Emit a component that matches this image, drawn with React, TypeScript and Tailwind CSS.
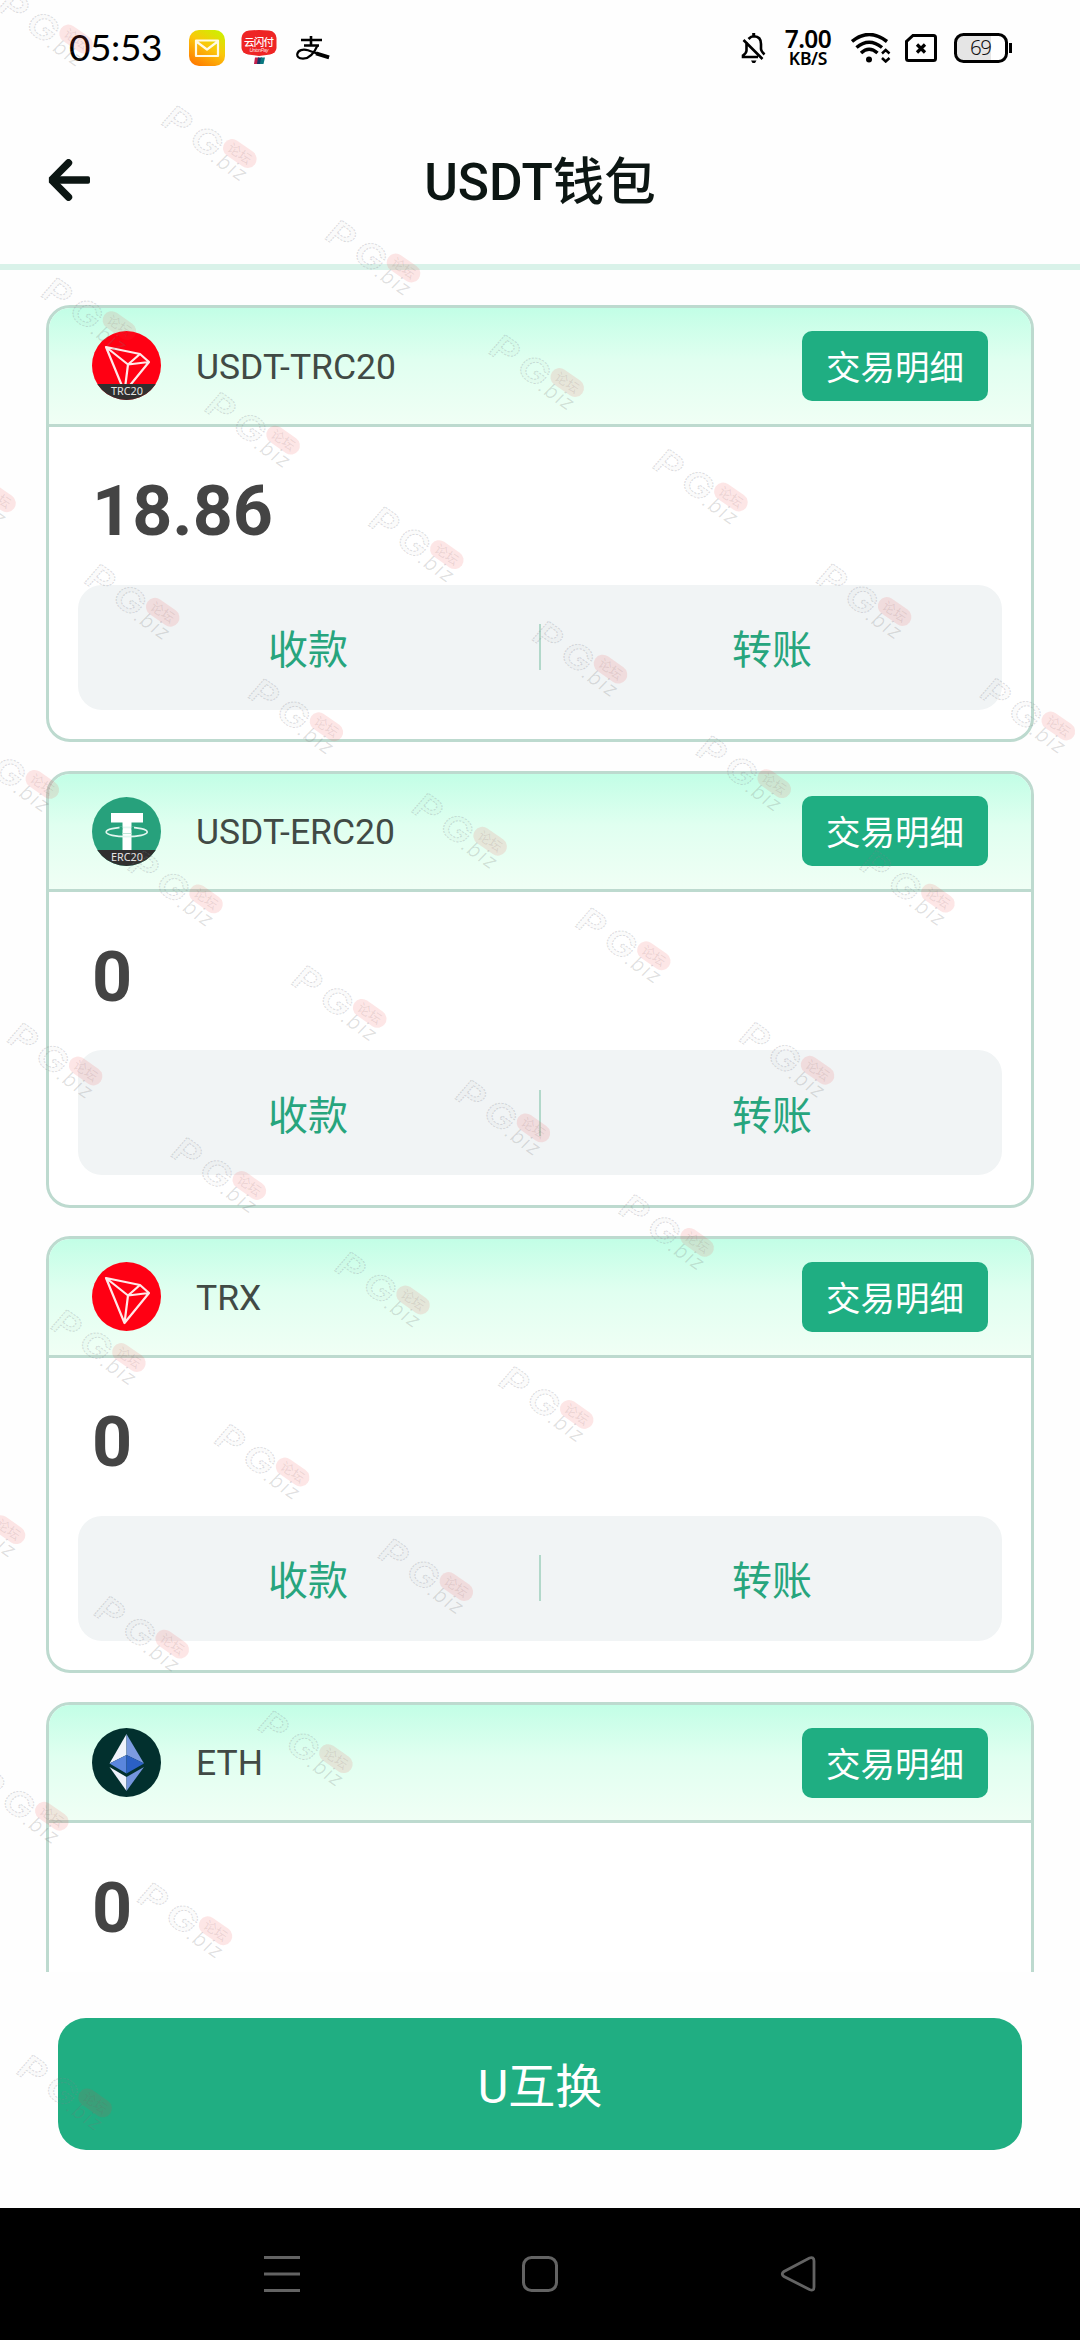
import { clsx } from 'clsx';

interface Wallet {
  name: string;
  balance: string;
  icon: React.ElementType;
}

function TronIcon({ label }: { label?: string }) {
  return (
    <svg className="h-[69px] w-[69px]" viewBox="0 0 69 69">
      <clipPath id="coin">
        <circle cx="34.5" cy="34.5" r="34.5" />
      </clipPath>
      <g clipPath="url(#coin)">
        <rect width="69" height="69" fill="#ff0013" />
        <path
          d="M14 16 48 23 57 31 32.500 61ZM14 16 36 33.500 57 31M36 33.500 48 23M36 33.500 32.500 61"
          fill="none"
          stroke="#ffe9e9"
          strokeWidth="2.200"
          strokeLinejoin="round"
        />
        {label && <LabelBand label={label} />}
      </g>
    </svg>
  );
}

function LabelBand({ label }: { label: string }) {
  return (
    <>
      <rect y="53" width="69" height="16" fill="#302f2f" />
      <text
        x="35"
        y="64"
        textAnchor="middle"
        fontSize="11"
        fill="#e4e4e4"
        fontFamily="'Noto Sans', sans-serif"
        textLength="32"
        lengthAdjust="spacingAndGlyphs"
      >
        {label}
      </text>
    </>
  );
}

function TronTrc20Icon() {
  return <TronIcon label="TRC20" />;
}

function TetherErc20Icon() {
  return (
    <svg className="h-[69px] w-[69px]" viewBox="0 0 69 69">
      <clipPath id="tether">
        <circle cx="34.5" cy="34.5" r="34.5" />
      </clipPath>
      <g clipPath="url(#tether)">
        <rect width="69" height="69" fill="#27a17c" />
        <path d="M19 16H51V25.500H39.500V54H30.500V25.500H19Z" fill="#fff" />
        <ellipse cx="34.700" cy="35" rx="20.500" ry="4.700" fill="none" stroke="#e3f6ef" strokeWidth="1.700" />
        <path d="M27.500 31H30.500M39.500 31H42" stroke="#27a17c" strokeWidth="3" />
        <path d="M30.500 36.500H39.500" stroke="#bfe5d8" strokeWidth="1" />
        <LabelBand label="ERC20" />
      </g>
    </svg>
  );
}

function EthIcon() {
  return (
    <svg className="h-[69px] w-[69px]" viewBox="0 0 69 69">
      <circle cx="34.5" cy="34.5" r="34.5" fill="#02302e" />
      <path d="M34.500 6V27L17.500 35.500Z" fill="#f1f3fb" />
      <path d="M34.500 6V27L52 35.500Z" fill="#7c9be0" />
      <path d="M34.500 27V45.500L17.500 35.500Z" fill="#5b86dc" />
      <path d="M34.500 27V45.500L52 35.500Z" fill="#2b60c4" />
      <path d="M34.500 49V63L17.500 39Z" fill="#eef1fb" />
      <path d="M34.500 49V63L52 39Z" fill="#7495dd" />
    </svg>
  );
}

const wallets: Wallet[] = [
  { name: 'USDT-TRC20', balance: '18.86', icon: TronTrc20Icon },
  { name: 'USDT-ERC20', balance: '0', icon: TetherErc20Icon },
  { name: 'TRX', balance: '0', icon: TronIcon },
  { name: 'ETH', balance: '0', icon: EthIcon }
];

function StatusBar() {
  return (
    <div className="flex h-24 items-center pr-[67px] pl-[69px] text-black">
      <span className="w-[120px] pb-[3px] font-['Lato',sans-serif] text-[37px] leading-none tracking-[-0.4px]">05:53</span>

      <svg className="h-9 w-9" viewBox="0 0 36 36">
        <defs>
          <linearGradient id="mail" x1="0.8" y1="0" x2="0.2" y2="1">
            <stop offset="0" stopColor="#cdf000" />
            <stop offset="0.45" stopColor="#fbc70c" />
            <stop offset="1" stopColor="#ff7a00" />
          </linearGradient>
        </defs>
        <rect width="36" height="36" rx="10" fill="url(#mail)" />
        <path d="M7 10.500H29V26H7ZM8 12 18 19.500 28 12" fill="none" stroke="#fffbe6" strokeWidth="2.200" strokeLinejoin="round" />
      </svg>

      <svg className="ml-4 h-9 w-9" viewBox="0 0 36 36">
        <path d="M8 .5Q18-.5 28 .5 35 1.500 35.500 8V18Q35 23 29 24.500L18 26 7 24.500Q1 23 .5 18V8Q1 1.500 8 .5Z" fill="#ee2525" />
        <text x="18" y="15.500" textAnchor="middle" fontSize="10.500" fontWeight="500" fill="#fff" textLength="30" fontFamily="'Noto Sans CJK SC', sans-serif">
          云闪付
        </text>
        <text x="18" y="21.800" textAnchor="middle" fontSize="5" fontStyle="italic" fill="#ffe0e0" textLength="19" fontFamily="'Liberation Sans', sans-serif">
          UnionPay
        </text>
        <path d="M14 27.500H18L17 34H13Z" fill="#c3204e" />
        <path d="M17 27.500H21L20 34H16Z" fill="#173a67" />
        <path d="M20 27.500H24L22.500 34H19Z" fill="#097880" />
      </svg>

      <svg className="ml-[19px] h-6 w-[34px]" viewBox="0 0 34 24" fill="none" stroke="#000">
        <path d="M15 0V10M5 4H26M8 9.500H23" strokeWidth="2.600" />
        <path d="M21.500 9.500C18 17.500 12.500 22.700 7 22.700 2.500 22.700 .9 20.500 1.300 18 2 14 7 12.800 12 14.300 18 16.300 24 19 33 21.500" strokeWidth="2.200" />
        <path d="M20 17.300 33 21.300" strokeWidth="4" />
      </svg>

      <svg className="ml-auto h-[30px] w-[25px]" viewBox="0 0 25 30" fill="none" stroke="#000" strokeWidth="2.600">
        <path d="M5.500 9V17.500Q5.500 20 2 22.500V24H17M7.500 6Q10 3.300 13 3.300 20 3.500 20 11V16Q20 18 23.500 21.500M2.500 7 21.500 26" />
        <path d="M12.700 0V3.500" strokeWidth="3" />
        <path d="M10 27.500H15.500L14 30H11.500Z" fill="#000" stroke="none" />
      </svg>

      <div className="ml-[17px] flex w-[50px] flex-col items-center font-['Noto_Sans',sans-serif] font-semibold">
        <span className="text-[24.5px] leading-[20px] tracking-[-0.6px]">7.00</span>
        <span className="pt-px text-[17.5px] leading-[17px] tracking-[-0.3px]">KB/S</span>
      </div>

      <svg className="ml-[18px] h-[30px] w-10" viewBox="0 0 40 30" fill="none" stroke="#000" strokeWidth="3.500">
        <path d="M1 8.500Q18-5.500 36 8.500M5.500 14.500Q18 4 31 14.500M10 20Q18 12.500 26.500 20" />
        <circle cx="18" cy="26.500" r="3" fill="#000" stroke="none" />
        <path d="M31 20.500 34.700 17 38.500 20.500M31 25 34.700 28.500 38.500 25" strokeWidth="2.500" />
      </svg>

      <svg className="ml-[14px] h-7 w-8" viewBox="0 0 32 28" fill="none" stroke="#000">
        <path d="M8 1.500H28.500Q30.500 1.500 30.500 3.500V24.500Q30.500 26.500 28.500 26.500H3.500Q1.500 26.500 1.500 24.500V7.500Z" strokeWidth="3" />
        <path d="M12 10.500 20 18.500M20 10.500 12 18.500" strokeWidth="3.200" />
      </svg>

      <svg className="ml-[17px] h-[30px] w-[59px]" viewBox="0 0 59 30">
        <rect x="1.500" y="1.500" width="51" height="27" rx="8" fill="#fff" />
        <path d="M9 3H37V27H9Q3 27 3 21V9Q3 3 9 3Z" fill="#e5e5e5" />
        <rect x="1.500" y="1.500" width="51" height="27" rx="8" fill="none" stroke="#000" strokeWidth="3" />
        <path d="M56.500 10V20" stroke="#000" strokeWidth="3" />
        <text x="27" y="22.300" textAnchor="middle" fontSize="20.500" fill="#111" fontFamily="'Noto Sans', sans-serif" fontWeight="300" textLength="22">
          69
        </text>
      </svg>
    </div>
  );
}

function Header() {
  return (
    <header className="flex h-[174px] items-center border-b-[6px] border-[#d9f2e9] pl-[47px]">
      <svg className="h-[42px] w-[43px]" viewBox="0 0 43 42" fill="none" stroke="#0c1613" strokeWidth="7.400">
        <path d="M21.500 3.800 4.500 21 21.500 38.200" strokeLinecap="round" strokeLinejoin="bevel" />
        <rect x="4" y="17.300" width="39" height="7.400" rx="1.800" fill="#0c1613" stroke="none" />
      </svg>
      <h1 className="flex-1 pt-1.5 pr-[90px] text-center text-[51.5px] font-medium text-[#0c1613]">USDT钱包</h1>
    </header>
  );
}

function WalletCard({ wallet }: { wallet: Wallet }) {
  return (
    <div className="h-[437px] shrink-0 overflow-hidden rounded-[24px] border-[3px] border-[#bddacf] bg-white">
      <div className="flex h-[118.5px] items-center border-b-[3px] border-[#bddacf] bg-linear-to-b from-[#c2fee6] via-[#e0fff0] via-45% to-[#f0fff5] pr-[43px] pl-[43px]">
        <wallet.icon />
        <span className="ml-[35px] pt-[3px] text-[35.5px] text-[#414a45]">{wallet.name}</span>
        <button className="ml-auto flex h-[70px] w-[186px] items-center justify-center rounded-[10px] bg-[#1fae82] pt-1.5 text-[34.5px] text-white">
          交易明细
        </button>
      </div>
      <div className="px-[29px]">
        <p className="flex h-[158px] items-center pt-3 pl-3.5 text-[70px] font-bold text-[#444]">{wallet.balance}</p>
        <div className="flex h-[125px] items-center rounded-[24px] bg-[#f1f4f5] text-[40px] text-[#27a57d]">
          <button className="flex-1 pt-2 pr-px">收款</button>
          <div className="h-[46px] w-0.5 bg-[#b2d8ca]" />
          <button className="flex-1 pt-2 pl-px">转账</button>
        </div>
      </div>
    </div>
  );
}

function NavBar() {
  return (
    <nav className="flex h-[132px] items-center justify-between bg-black pr-[264px] pl-[264px]">
      <svg className="h-9 w-9" viewBox="0 0 36 36" fill="none" stroke="#636363" strokeWidth="3">
        <path d="M0 1.500H36M0 18H36M0 34.500H36" />
      </svg>
      <svg className="h-9 w-9" viewBox="0 0 36 36" fill="none" stroke="#636363" strokeWidth="3">
        <rect x="1.500" y="1.500" width="33" height="33" rx="8" />
      </svg>
      <svg className="h-9 w-9" viewBox="0 0 36 36" fill="none" stroke="#636363" strokeWidth="2.800">
        <path d="M29.500 2Q34 .5 34 5V31Q34 35.500 29.500 33.500L4 20.500Q.5 18 4 15.500Z" />
      </svg>
    </nav>
  );
}

// diagonal lattice, tiles that fall fully off the left or right edge are dropped
const marks = Array.from({ length: 9 }, (_, row) =>
  Array.from({ length: 7 }, (_, i) => {
    const col = i - 1;
    return { x: 161 + 163.7 * col - 120.4 * row, y: 124 + 114.5 * col + 172.1 * row };
  })
)
  .flat()
  .filter(({ x }) => x > -100 && x < 1080);

function Watermark() {
  return (
    <svg className="pointer-events-none absolute inset-0 h-[2208px] w-[1080px]" viewBox="0 0 1080 2208">
      {marks.map(({ x, y }) => (
        <g key={`${x},${y}`} transform={`translate(${x} ${y}) rotate(35)`}>
          <text
            transform="skewX(-6) scale(1.2 1)"
            x="-2 26"
            fontFamily="Inter, sans-serif"
            fontSize="34"
            fontWeight="600"
            fill="#888"
            fillOpacity="0.03"
            stroke="#80808c"
            strokeOpacity="0.28"
            strokeDasharray="2 1"
          >
            PG
          </text>
          <text x="61 68 82 88" y="2" fontFamily="Inter, sans-serif" fontSize="20" fontWeight="300" fontStyle="italic" fill="#777" fillOpacity="0.24">
            .biz
          </text>
          <rect x="63" y="-30" width="37" height="18" rx="9" fill="#f03c3c" fillOpacity="0.13" />
          <text x="68.500" y="-16.300" fontFamily="'Noto Sans CJK SC', sans-serif" fontSize="13" fill="#7a5a5a" fillOpacity="0.14">
            论坛
          </text>
        </g>
      ))}
    </svg>
  );
}

export default function App() {
  return (
    <div
      className={clsx(
        'relative flex h-[2340px] w-[1080px] flex-col overflow-hidden bg-[#fefefe]',
        "font-['Roboto','Noto_Sans_CJK_SC',sans-serif]"
      )}
    >
      <StatusBar />
      <Header />
      <main className="flex h-[1702px] flex-col gap-[28.6px] overflow-hidden px-[46px] pt-[35px]">
        {wallets.map((wallet) => (
          <WalletCard key={wallet.name} wallet={wallet} />
        ))}
      </main>
      <div className="flex-1 px-[58px] pt-[46px]">
        <button className="h-[132px] w-full rounded-[28px] bg-[#20ae82] pt-1.5 text-[47px] text-white">U互换</button>
      </div>
      <NavBar />
      <Watermark />
    </div>
  );
}
